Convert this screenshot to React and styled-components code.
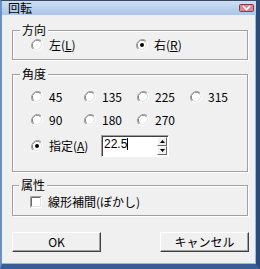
import React from 'react';
import styled, { createGlobalStyle } from 'styled-components';

const GlobalStyle = createGlobalStyle`
  html, body {
    margin: 0;
    padding: 0;
    background: #f0f0f0;
  }
  body {
    font-family: "Noto Sans CJK JP", "DejaVu Sans", sans-serif;
    font-size: 12px;
    color: #000;
  }
`;

const Frame = styled.div`
  width: 260px;
  height: 269px;
  box-sizing: border-box;
  display: flex;
  flex-direction: column;
  background: #f0f0f0;
  border-left: 2px solid #6d8fc4;
  border-right: 4px solid #2c4a7c;
  border-bottom: 5px solid #3a5d96;
  border-top: 1px solid #3b4a63;
  box-shadow: inset -1px -1px 0 #9ab8e0;
`;

const TitleBar = styled.div`
  height: 14px;
  flex: none;
  display: flex;
  align-items: center;
  justify-content: space-between;
  padding: 0 2px 0 6px;
  background: linear-gradient(#cddef3, #abc6e8);
`;

const Title = styled.span`
  font-size: 12px;
  line-height: 14px;
`;

const Body = styled.div`
  flex: 1;
  display: flex;
  flex-direction: column;
  padding: 0 8px 0 10px;
`;

const GroupBox = styled.div`
  display: flex;
  flex-direction: column;
  margin-top: ${p => p.$top}px;
  padding: ${p => p.$pad};
  border: 1px solid #a0a0a0;
  box-shadow: inset 1px 1px 0 #fff, 1px 1px 0 #fff;
`;

const Caption = styled.div`
  align-self: flex-start;
  margin: -8px 0 0 -11px;
  padding: 0 2px;
  line-height: 14px;
  height: 14px;
  background: #f0f0f0;
`;

const Row = styled.div`
  display: flex;
  align-items: center;
  height: ${p => p.$h || 16}px;
  margin-top: ${p => p.$mt || 0}px;
`;

const Option = styled.label`
  display: flex;
  align-items: center;
  gap: 6px;
  width: ${p => p.$w}px;
  flex: none;
  line-height: 16px;
  white-space: nowrap;
`;

const Edit = styled.div`
  width: 68px;
  height: 22px;
  box-sizing: border-box;
  display: flex;
  background: #fff;
  border-top: 1px solid #a0a0a0;
  border-left: 1px solid #a0a0a0;
  border-bottom: 1px solid #fff;
  border-right: 1px solid #fff;
  box-shadow: inset 1px 1px 0 #404040;
`;

const EditText = styled.div`
  flex: 1;
  padding: 1px 0 0 2px;
  line-height: 14px;
  font-family: "Liberation Sans", sans-serif;
  font-size: 12px;
`;

const Caret = styled.span`
  display: inline-block;
  width: 1px;
  height: 12px;
  background: #000;
  vertical-align: -2px;
`;

const Spin = styled.div`
  width: 10px;
  display: flex;
  flex-direction: column;
  padding: 1px 1px 1px 0;
`;

const SpinButton = styled.div`
  height: 10px;
  box-sizing: border-box;
  display: flex;
  align-items: center;
  justify-content: center;
  background: #f0f0f0;
  border-top: 1px solid #fff;
  border-left: 1px solid #fff;
  border-right: 1px solid #696969;
  border-bottom: 1px solid #696969;
`;

const Buttons = styled.div`
  display: flex;
  justify-content: space-between;
  margin: 16px -1px 0 0;
`;

const Button = styled.button`
  width: 89px;
  height: 20px;
  box-sizing: border-box;
  padding: 0;
  background: #f0f0f0;
  font-family: "Noto Sans CJK JP", sans-serif;
  font-size: 12px;
  line-height: 16px;
  color: #000;
  border-top: 1px solid #fff;
  border-left: 1px solid #fff;
  border-right: 1px solid #404040;
  border-bottom: 1px solid #404040;
  box-shadow: inset -1px -1px 0 #a0a0a0;
`;

function Radio({ checked }) {
  return (
    <svg width="12" height="12" viewBox="0 0 12 12">
      <path d="M10.2 1.8 A6 6 0 0 0 1.8 10.2" fill="none" stroke="#a0a0a0" strokeWidth="1" />
      <path d="M9.5 2.5 A5 5 0 0 0 2.5 9.5" fill="none" stroke="#696969" strokeWidth="1" />
      <circle cx="6" cy="6" r="4.2" fill="#fff" />
      <path d="M1.8 10.2 A6 6 0 0 0 10.2 1.8" fill="none" stroke="#fff" strokeWidth="1" />
      <path d="M2.5 9.5 A5 5 0 0 0 9.5 2.5" fill="none" stroke="#e3e3e3" strokeWidth="1" />
      {checked && <circle cx="6" cy="6" r="2" fill="#000" />}
    </svg>
  );
}

function Check() {
  return (
    <svg width="12" height="12" viewBox="0 0 12 12">
      <rect x="0" y="0" width="12" height="12" fill="#fff" />
      <path d="M0.5 11.5 V0.5 H11.5" fill="none" stroke="#a0a0a0" />
      <path d="M1.5 10.5 V1.5 H10.5" fill="none" stroke="#696969" />
      <path d="M1.5 10.5 H10.5 V1.5" fill="none" stroke="#e3e3e3" />
    </svg>
  );
}

function CloseIcon() {
  return (
    <svg width="15" height="8" viewBox="0 0 15 8">
      <rect x="0.5" y="0.5" width="14" height="7" rx="1" fill="#d88a8a" stroke="#8a3b3b" />
      <path d="M4 2 L7.5 5.5 L11 2" fill="none" stroke="#fff" strokeWidth="1.6" />
    </svg>
  );
}

function Arrow({ up }) {
  return (
    <svg width="5" height="3" viewBox="0 0 5 3">
      <path d={up ? 'M2.5 0 L5 3 L0 3 Z' : 'M0 0 L5 0 L2.5 3 Z'} fill="#000" />
    </svg>
  );
}

const angles = [
  ['45', '135', '225', '315'],
  ['90', '180', '270'],
];

export default function App() {
  return (
    <>
      <GlobalStyle />
      <Frame>
        <TitleBar>
          <Title>回転</Title>
          <CloseIcon />
        </TitleBar>
        <Body>
          <GroupBox $top={15} $pad="0 0 6px 18px">
            <Caption>方向</Caption>
            <Row>
              <Option $w={105}><Radio /><span>左(<u>L</u>)</span></Option>
              <Option $w={100}><Radio checked /><span>右(<u>R</u>)</span></Option>
            </Row>
          </GroupBox>

          <GroupBox $top={14} $pad="0 0 14px 18px">
            <Caption>角度</Caption>
            {angles.map((row, i) => (
              <Row key={i} $mt={i ? 7 : 8}>
                {row.map(a => (
                  <Option key={a} $w={53}><Radio /><span>{a}</span></Option>
                ))}
              </Row>
            ))}
            <Row $h={22} $mt={7}>
              <Option $w={70}><Radio checked /><span>指定(<u>A</u>)</span></Option>
              <Edit>
                <EditText>22.5<Caret /></EditText>
                <Spin>
                  <SpinButton><Arrow up /></SpinButton>
                  <SpinButton><Arrow /></SpinButton>
                </Spin>
              </Edit>
            </Row>
          </GroupBox>

          <GroupBox $top={13} $pad="0 0 5px 17px">
            <Caption>属性</Caption>
            <Row $mt={2}>
              <Option><Check /><span>線形補間(ぼかし)</span></Option>
            </Row>
          </GroupBox>

          <Buttons>
            <Button>OK</Button>
            <Button>キャンセル</Button>
          </Buttons>
        </Body>
      </Frame>
    </>
  );
}
